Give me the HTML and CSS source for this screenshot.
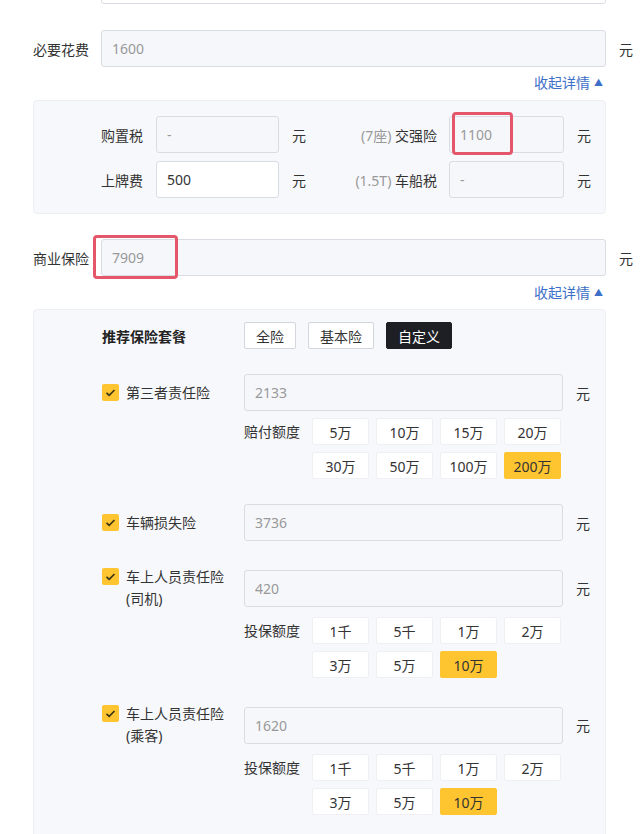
FILE: index.html
```html
<!DOCTYPE html>
<html lang="zh-CN">
<head>
    <meta charset="UTF-8">
    <meta name="viewport" content="width=device-width, initial-scale=1.0">
    <title>购车费用</title>
    <link rel="stylesheet" href="styles.css">
</head>
<body>
    <div class="page">
        <div class="row cut">
            <span class="label"></span>
            <input class="field wide plain" readonly value="">
            <span class="unit"></span>
        </div>

        <div class="row">
            <span class="label">必要花费</span>
            <input class="field wide" readonly value="1600">
            <span class="unit">元</span>
        </div>
        <div class="toggle"><a href="#">收起详情<span class="arrow">▲</span></a></div>

        <div class="panel fees">
            <div class="fee-row">
                <span class="fee-label">购置税</span>
                <input class="field short" readonly value="-">
                <span class="unit">元</span>
                <span class="fee-label right"><em>(7座)</em> 交强险</span>
                <div class="mark-wrap">
                    <input class="field narrow" readonly value="1100">
                    <span class="mark mark-jq"></span>
                </div>
                <span class="unit">元</span>
            </div>
            <div class="fee-row">
                <span class="fee-label">上牌费</span>
                <input class="field short plain" value="500">
                <span class="unit">元</span>
                <span class="fee-label right"><em>(1.5T)</em> 车船税</span>
                <input class="field narrow" readonly value="-">
                <span class="unit">元</span>
            </div>
        </div>

        <div class="row biz">
            <span class="label">商业保险</span>
            <div class="mark-wrap">
                <input class="field wide" readonly value="7909">
                <span class="mark mark-biz"></span>
            </div>
            <span class="unit">元</span>
        </div>
        <div class="toggle second"><a href="#">收起详情<span class="arrow">▲</span></a></div>

        <div class="panel plans">
            <div class="plan-row">
                <span class="plan-title">推荐保险套餐</span>
                <div class="plan-btns">
                    <button class="plan-btn">全险</button>
                    <button class="plan-btn">基本险</button>
                    <button class="plan-btn active">自定义</button>
                </div>
            </div>

            <div class="item">
                <div class="item-head">
                    <label class="check"><span class="box"><svg viewBox="0 0 17 17" width="17" height="17"><path d="M4.5 8.8l2.7 2.6 5.3-5.4" fill="none" stroke="#3a3216" stroke-width="1.6"/></svg></span><span class="check-text">第三者责任险</span></label>
                    <input class="field item-input" readonly value="2133">
                    <span class="unit">元</span>
                </div>
                <div class="amounts">
                    <span class="amount-label">赔付额度</span>
                    <div class="amount-grid">
                        <button class="amount">5万</button>
                        <button class="amount">10万</button>
                        <button class="amount">15万</button>
                        <button class="amount">20万</button>
                        <button class="amount">30万</button>
                        <button class="amount">50万</button>
                        <button class="amount">100万</button>
                        <button class="amount active">200万</button>
                    </div>
                </div>
            </div>

            <div class="item">
                <div class="item-head">
                    <label class="check"><span class="box"><svg viewBox="0 0 17 17" width="17" height="17"><path d="M4.5 8.8l2.7 2.6 5.3-5.4" fill="none" stroke="#3a3216" stroke-width="1.6"/></svg></span><span class="check-text">车辆损失险</span></label>
                    <input class="field item-input" readonly value="3736">
                    <span class="unit">元</span>
                </div>
            </div>

            <div class="item">
                <div class="item-head">
                    <label class="check"><span class="box"><svg viewBox="0 0 17 17" width="17" height="17"><path d="M4.5 8.8l2.7 2.6 5.3-5.4" fill="none" stroke="#3a3216" stroke-width="1.6"/></svg></span><span class="check-text">车上人员责任险<br>(司机)</span></label>
                    <input class="field item-input" readonly value="420">
                    <span class="unit">元</span>
                </div>
                <div class="amounts">
                    <span class="amount-label">投保额度</span>
                    <div class="amount-grid">
                        <button class="amount">1千</button>
                        <button class="amount">5千</button>
                        <button class="amount">1万</button>
                        <button class="amount">2万</button>
                        <button class="amount">3万</button>
                        <button class="amount">5万</button>
                        <button class="amount active">10万</button>
                    </div>
                </div>
            </div>

            <div class="item">
                <div class="item-head">
                    <label class="check"><span class="box"><svg viewBox="0 0 17 17" width="17" height="17"><path d="M4.5 8.8l2.7 2.6 5.3-5.4" fill="none" stroke="#3a3216" stroke-width="1.6"/></svg></span><span class="check-text">车上人员责任险<br>(乘客)</span></label>
                    <input class="field item-input" readonly value="1620">
                    <span class="unit">元</span>
                </div>
                <div class="amounts">
                    <span class="amount-label">投保额度</span>
                    <div class="amount-grid">
                        <button class="amount">1千</button>
                        <button class="amount">5千</button>
                        <button class="amount">1万</button>
                        <button class="amount">2万</button>
                        <button class="amount">3万</button>
                        <button class="amount">5万</button>
                        <button class="amount active">10万</button>
                    </div>
                </div>
            </div>
        </div>
    </div>
</body>
</html>
```

FILE: styles.css
```css
body {
    margin: 0;
    font-family: "Noto Sans", "Noto Sans CJK SC", sans-serif;
    font-size: 14px;
    color: #333;
    background: #fff;
}
.page {
    padding-left: 33px;
    padding-bottom: 40px;
}
.row {
    display: flex;
    align-items: center;
    height: 37px;
    margin-top: 26px;
}
.row.cut {
    margin-top: -33px;
}
.row.biz {
    margin-top: 25px;
}
.label {
    width: 56px;
    margin-right: 12px;
    white-space: nowrap;
}
.unit {
    margin-left: 13px;
}
.field {
    box-sizing: border-box;
    height: 37px;
    border: 1px solid #d9dce3;
    border-radius: 3px;
    background: #f6f7fa;
    padding: 0 10px;
    font: inherit;
    color: #999;
    outline: none;
}
.field.plain {
    background: #fff;
    color: #333;
}
.field.wide {
    width: 505px;
}
.field.short {
    width: 123px;
}
.field.narrow {
    width: 115px;
}
.mark-wrap {
    position: relative;
    display: flex;
}
.mark {
    position: absolute;
    box-sizing: border-box;
    border: 3px solid #e4566a;
    border-radius: 4px;
}
.mark-biz {
    left: -8px;
    top: -4px;
    width: 85px;
    height: 44px;
}
.mark-jq {
    left: 3px;
    top: -4px;
    width: 61px;
    height: 43px;
}
.toggle {
    width: 570px;
    text-align: right;
    line-height: 20px;
    margin-top: 6px;
}
.toggle.second {
    margin-top: 7px;
}
.toggle a {
    color: #3d6fc8;
    text-decoration: none;
}
.arrow {
    font-size: 9px;
    margin-left: 4px;
    vertical-align: 2px;
}
.panel {
    box-sizing: border-box;
    width: 573px;
    background: #f7f8fb;
    border: 1px solid #eceef2;
    border-radius: 4px;
}
.fees {
    margin-top: 7px;
    padding: 15px 0;
}
.fee-row {
    display: flex;
    align-items: center;
}
.fee-row + .fee-row {
    margin-top: 8px;
}
.fee-label {
    width: 109px;
    margin-right: 13px;
    text-align: right;
    white-space: nowrap;
}
.fee-label.right {
    width: 131px;
    margin-right: 12px;
}
.fee-label em {
    font-style: normal;
    color: #999;
}
.plans {
    margin-top: 6px;
    padding: 12px 0 60px 68px;
}
.plan-row {
    display: flex;
    align-items: center;
}
.plan-title {
    width: 142px;
    font-weight: 700;
    color: #222;
}
.plan-btns {
    display: flex;
    gap: 12px;
}
.plan-btn {
    height: 27px;
    padding: 0 11px;
    border: 1px solid #d3d6dc;
    border-radius: 2px;
    background: #fff;
    font: inherit;
    color: #333;
}
.plan-btn.active {
    background: #1d1f25;
    border-color: #1d1f25;
    color: #fff;
}
.item {
    margin-top: 25px;
}
.item-head {
    display: flex;
    align-items: center;
}
.check {
    width: 142px;
    display: flex;
    align-items: flex-start;
    line-height: 22px;
}
.box {
    width: 17px;
    height: 17px;
    margin-top: 2px;
    margin-right: 7px;
    border-radius: 2px;
    background: #ffc530;
    flex-shrink: 0;
    display: flex;
}
.item-input {
    width: 319px;
}
.amounts {
    display: flex;
    align-items: flex-start;
    margin-top: 7px;
    margin-left: 142px;
}
.amount-label {
    width: 56px;
    margin-right: 12px;
    line-height: 27px;
    white-space: nowrap;
}
.amount-grid {
    display: grid;
    grid-template-columns: repeat(4, 57px);
    grid-auto-rows: 27px;
    gap: 7px;
}
.amount {
    border: 1px solid #eef0f3;
    border-radius: 2px;
    background: #fff;
    font: inherit;
    color: #333;
    padding: 0;
}
.amount.active {
    background: #ffc530;
    border-color: #ffc530;
}
```
